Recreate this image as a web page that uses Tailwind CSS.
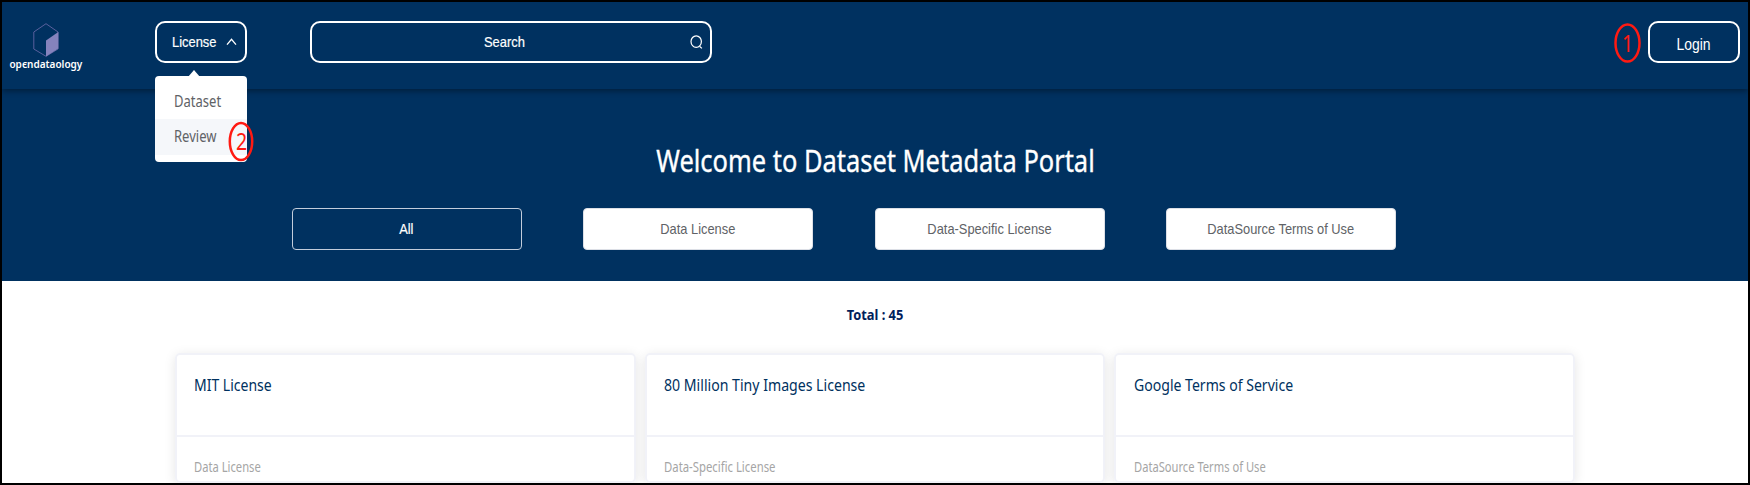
<!DOCTYPE html>
<html lang="en">
<head>
<meta charset="utf-8">
<title>Dataset Metadata Portal</title>
<script src="https://cdn.jsdelivr.net/npm/@tailwindcss/browser@4"></script>
</head>
<body class="h-[485px] w-[1750px] overflow-hidden bg-white font-['Noto_Sans',sans-serif]">
<div class="relative flex h-[485px] flex-col overflow-hidden border-2 border-black">
  <header class="relative z-10 flex h-[87px] shrink-0 items-start bg-[#003160] pt-[19px] shadow-[0_2px_6px_rgba(0,0,0,0.4)] font-['Liberation_Sans',sans-serif] text-white">
    <div class="flex w-[87px] flex-col items-center pt-[2px]">
      <svg class="h-[34px] w-[26px]" viewBox="0 0 26 34" fill="none">
        <path d="M13 .7 25 9v17L13 33.3.8 26V9Z" stroke="#59609d" stroke-width="1"/>
        <path d="M13 17.5 25.3 9v16.5L13 33.5Z" fill="#8583bd"/>
      </svg>
      <span class="scale-x-[0.87] font-['Noto_Sans',sans-serif] text-[11.5px] leading-[14px] font-semibold">op&#1013;ndataology</span>
    </div>
    <div class="relative ml-[66px] w-[92px]">
      <button class="flex h-[42px] w-full items-center rounded-[10px] border-2 border-white pl-[14.5px]">
        <span class="w-[45px] origin-left scale-x-[0.86] text-[15px] whitespace-nowrap [-webkit-text-stroke:0.2px_#fff]">License</span>
        <svg class="ml-[9px] h-[8px] w-[11px]" viewBox="0 0 11 8" fill="none" stroke="#fff" stroke-width="1.3"><path d="M1 6.7 5.5 1.3 10 6.7"/></svg>
      </button>
      <div class="absolute top-[55px] left-0 h-[86px] w-[92px] rounded-[4px] bg-white pt-[8px] font-['Noto_Sans',sans-serif] text-[15.5px] text-[#606266]">
        <svg class="absolute -top-[6px] left-[33px] h-[7px] w-[12px]" viewBox="0 0 12 7" fill="#fff"><path d="M0 7 6 0l6 7Z"/></svg>
        <div class="h-[35px] pl-[19px] leading-[34px]"><span class="inline-block origin-left scale-x-[0.84]">Dataset</span></div>
        <div class="h-[36px] bg-[#f5f7fa] pl-[19px] leading-[35px]"><span class="inline-block origin-left scale-x-[0.84]">Review</span></div>
        <svg class="absolute top-[45px] left-[73px] h-[41px] w-[26px]" viewBox="0 0 26 41"><ellipse cx="13" cy="20.5" rx="11.2" ry="18.6" fill="none" stroke="#ff1a12" stroke-width="2.5"/></svg>
        <span class="absolute top-[53px] left-[80.5px] origin-left scale-x-[0.85] text-[23px] leading-[24px] text-[#ff1a12]">2</span>
      </div>
    </div>
    <div class="ml-[62.5px] flex h-[42px] w-[402.5px] items-center rounded-[10px] border-2 border-white">
      <span class="ml-[172.5px] w-[41px] origin-left scale-x-[0.86] text-[15px] [-webkit-text-stroke:0.2px_#fff]">Search</span>
      <svg class="ml-[165px] h-[15px] w-[13px]" viewBox="0 0 13 15" fill="none" stroke="#fff" stroke-width="1.2"><ellipse cx="6.2" cy="6.6" rx="5.2" ry="5.8"/><path d="m9.5 11.2 2.4 2.2"/></svg>
    </div>
    <div class="ml-[902px] flex">
      <div class="relative h-[42px] w-[27px]">
        <svg class="h-[42px] w-[27px]" viewBox="0 0 27 42"><ellipse cx="13.5" cy="22" rx="12" ry="18.6" fill="none" stroke="#ff1a12" stroke-width="2.5"/></svg>
        <span class="absolute top-[10px] left-[7.5px] origin-left scale-x-[0.85] font-['Noto_Sans',sans-serif] text-[23px] leading-[24px] text-[#ff1a12]">1</span>
      </div>
      <button class="ml-[7px] flex h-[42px] w-[92px] items-center justify-center rounded-[10px] border-2 border-white pt-[5px]"><span class="scale-x-[0.87] text-[16px]">Login</span></button>
    </div>
  </header>

  <section class="flex h-[192px] shrink-0 flex-col items-center bg-[#003160]">
    <h1 class="mt-[52px] scale-x-[0.848] text-[30px] leading-[40px] whitespace-nowrap text-white [-webkit-text-stroke:0.35px_#fff]">Welcome to Dataset Metadata Portal</h1>
    <div class="mt-[27px] mr-[62.5px] flex gap-[61.5px] font-['Liberation_Sans',sans-serif] text-[15px] text-[#606266]">
      <button class="flex h-[42px] w-[230px] items-center justify-center rounded-[4px] border border-[#c3cddb] text-white"><span class="scale-x-[0.857] [-webkit-text-stroke:0.2px_#fff]">All</span></button>
      <button class="flex h-[42px] w-[230px] items-center justify-center rounded-[4px] border border-[#dcdfe6] bg-white"><span class="scale-x-[0.857]">Data License</span></button>
      <button class="flex h-[42px] w-[230px] items-center justify-center rounded-[4px] border border-[#dcdfe6] bg-white"><span class="scale-x-[0.857]">Data-Specific License</span></button>
      <button class="flex h-[42px] w-[230px] items-center justify-center rounded-[4px] border border-[#dcdfe6] bg-white"><span class="scale-x-[0.857]">DataSource Terms of Use</span></button>
    </div>
  </section>

  <main class="flex flex-col">
    <p class="mt-[23px] scale-x-[0.885] text-center text-[14.5px] leading-[20px] font-bold text-[#00205b]">Total : 45</p>
    <div class="mt-[29px] flex gap-[9px] pl-[173px]">
      <article class="h-[130px] w-[460.5px] rounded-[5px] border-2 border-[#f1f2f8] shadow-[0_2px_12px_rgba(0,0,0,0.1)]">
        <h2 class="h-[82px] border-b-2 border-[#f1f2f8] pt-[18px] pl-[17px] text-[17px] leading-[24px] text-[#003160]"><span class="inline-block origin-left scale-x-[0.823]">MIT License</span></h2>
        <p class="pt-[20px] pl-[17px] text-[14px] leading-[20px] text-[#a5a5a5]"><span class="inline-block origin-left scale-x-[0.8]">Data License</span></p>
      </article>
      <article class="h-[130px] w-[460.5px] rounded-[5px] border-2 border-[#f1f2f8] shadow-[0_2px_12px_rgba(0,0,0,0.1)]">
        <h2 class="h-[82px] border-b-2 border-[#f1f2f8] pt-[18px] pl-[17px] text-[17px] leading-[24px] text-[#003160]"><span class="inline-block origin-left scale-x-[0.83]">80 Million Tiny Images License</span></h2>
        <p class="pt-[20px] pl-[17px] text-[14px] leading-[20px] text-[#a5a5a5]"><span class="inline-block origin-left scale-x-[0.81]">Data-Specific License</span></p>
      </article>
      <article class="h-[130px] w-[460.5px] rounded-[5px] border-2 border-[#f1f2f8] shadow-[0_2px_12px_rgba(0,0,0,0.1)]">
        <h2 class="h-[82px] border-b-2 border-[#f1f2f8] pt-[18px] pl-[17.5px] text-[17px] leading-[24px] text-[#003160]"><span class="inline-block origin-left scale-x-[0.827]">Google Terms of Service</span></h2>
        <p class="pt-[20px] pl-[17.5px] text-[14px] leading-[20px] text-[#a5a5a5]"><span class="inline-block origin-left scale-x-[0.797]">DataSource Terms of Use</span></p>
      </article>
    </div>
  </main>
</div>
</body>
</html>
